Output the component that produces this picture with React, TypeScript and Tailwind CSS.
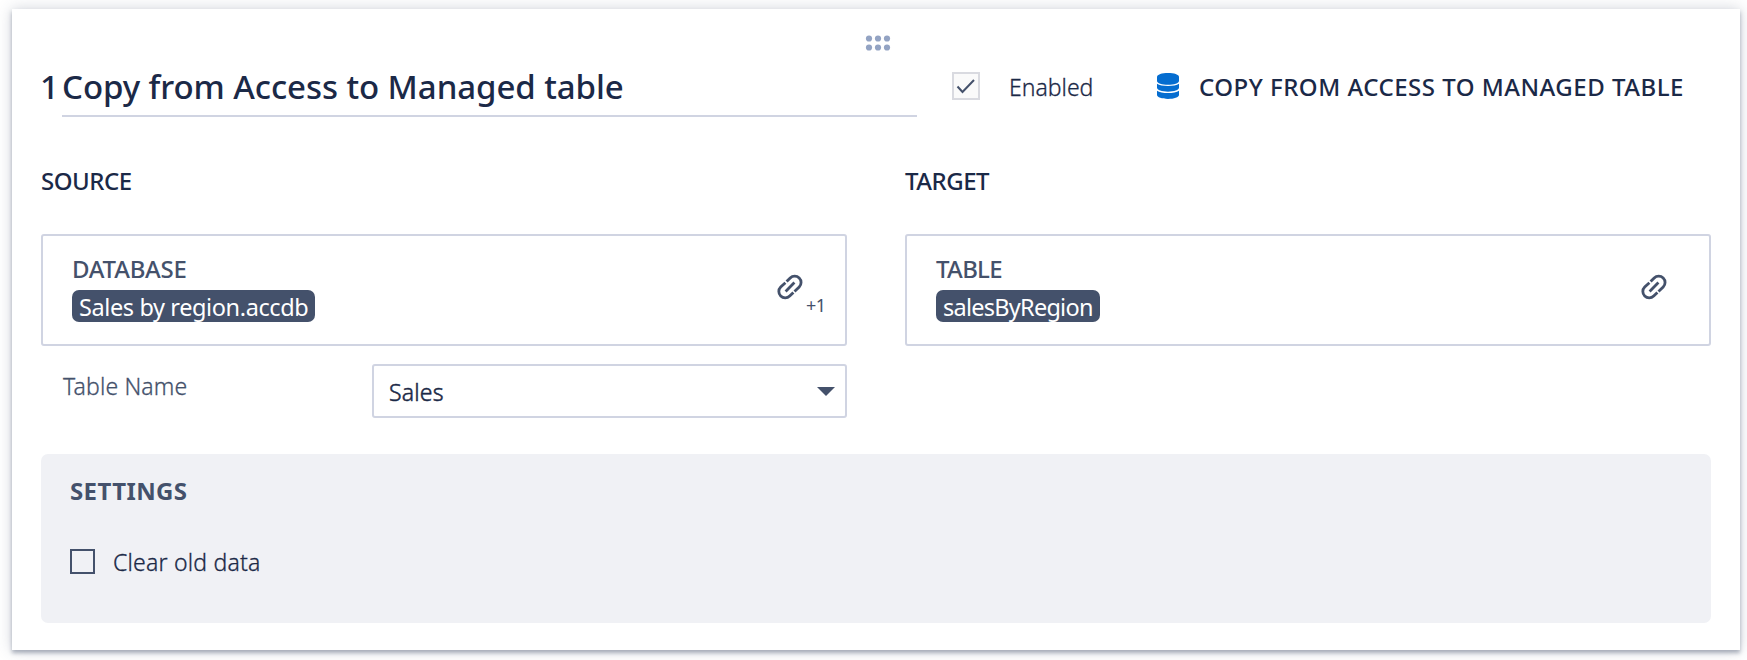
import type { ReactNode } from 'react'

interface ResourceCardProps {
  label: string
  value: string
  labelClass?: string
  valueClass?: string
  extra?: string
}

function LinkIcon() {
  return (
    <svg viewBox="0 0 26 26" className="h-[26px] w-[26px]" fill="none" stroke="#44516b" strokeWidth="2.8">
      <path d="M9.6 7.600 13.200 3.900a6.200 6.200 0 0 1 9 9l-4.700 4.500" />
      <path d="M8.400 8.700 3.700 13.100a6.200 6.200 0 0 0 9 9l3.700-3.700" />
      <path d="m8.600 17.400 8.800-8.800" />
    </svg>
  )
}

function DragHandle() {
  return (
    <svg viewBox="0 0 26 16" className="h-4 w-[26px]" fill="#93a3c3">
      {[4, 13, 22].map((x) => [3.5, 12.5].map((y) => <circle key={`${x}-${y}`} cx={x} cy={y} r="3.1" />))}
    </svg>
  )
}

function DatabaseIcon() {
  return (
    <svg viewBox="0 0 22 26" className="h-[26px] w-[22px]" fill="#056dd0">
      <path d="M0 4C0 1.500 5 0 11 0s11 1.500 11 4v4c0 2.300-5 3.700-11 3.700S0 10.300 0 8z" />
      <path d="M0 10.800c2.200 1.500 6.200 2.200 11 2.200s8.800-.7 11-2.200v4c0 2.300-5 3.900-11 3.900s-11-1.600-11-3.900z" />
      <path d="M0 17.800c2.200 1.600 6.200 2.300 11 2.300s8.800-.7 11-2.300v4.300c0 2.400-5 3.900-11 3.900s-11-1.500-11-3.900z" />
    </svg>
  )
}

function SectionTitle({ children }: { children: ReactNode }) {
  return <h3 className="h-8 text-[24px] font-medium leading-8 tracking-[-0.5px] text-[#1b2947]">{children}</h3>
}

/** Bordered box for the resource a step reads from or writes to. */
function ResourceCard({ label, value, labelClass = '', valueClass = '', extra }: ResourceCardProps) {
  return (
    <div className="flex h-28 justify-between rounded-[3px] border-2 border-[#d0d4e2] pl-[29px] pt-[17px]">
      <div className="flex flex-col items-start">
        <span className={`h-8 text-[24px] font-medium leading-8 text-[#44516b] ${labelClass}`}>{label}</span>
        <span className="mt-[5px] h-8 overflow-hidden rounded-[7px] bg-[#44516b] px-[7px] text-[23.5px] leading-[34px] text-white">
          <span className={`whitespace-nowrap ${valueClass}`}>{value}</span>
        </span>
      </div>
      <div className="flex w-[68px] pt-[21px]">
        <LinkIcon />
        <span className="ml-[3px] mt-[19px] text-[18px] leading-6 tracking-[-0.5px] text-[#44516b]">{extra}</span>
      </div>
    </div>
  )
}

export default function App() {
  return (
    <main className="h-[660px] w-[1747px] overflow-hidden bg-white pl-3 pt-[9px] font-['Noto_Sans',sans-serif]">
      <section className="flex h-[641px] w-[1728px] flex-col bg-white px-[29px] shadow-[0_3px_4px_rgba(68,81,107,0.4),0_0_14px_rgba(68,81,107,0.25)]">
        <div className="flex justify-center pl-1 pt-[26px]">
          <DragHandle />
        </div>

        <header className="flex h-[66px] items-start">
          <div className="w-[21px] pt-3 text-[33px] font-medium leading-[48px] text-[#1b2947]">
            <span className="-ml-px">1</span>
          </div>
          <div className="h-[66px] w-[855px] border-b-2 border-[#d0d4e2] pt-3">
            <h2 className="whitespace-nowrap text-[33px] font-medium leading-[48px] tracking-[-0.07px] text-[#1b2947]">
              Copy from Access to Managed table
            </h2>
          </div>
          <div className="ml-[35px] mt-[21px] flex h-7 w-7 items-center justify-center border-2 border-[#d9dae0] bg-[#fafafa]">
            <svg viewBox="0 0 20 16" className="h-4 w-5" fill="none" stroke="#44516b" strokeWidth="2">
              <path d="m1.500 8.500 5 5.500L18 2" />
            </svg>
          </div>
          <span className="ml-[29px] mt-5 w-[148px] text-[23px] font-light leading-8 text-[#1b2947] [-webkit-text-stroke:0.3px]">
            Enabled
          </span>
          <div className="mt-[22px]">
            <DatabaseIcon />
          </div>
          <span className="ml-5 mt-5 whitespace-nowrap text-[24px] font-medium leading-8 tracking-[0.5px] text-[#1b2947]">
            COPY FROM ACCESS TO MANAGED TABLE
          </span>
        </header>

        <div className="mt-[48px] flex gap-[58px]">
          <div className="w-[806px]">
            <SectionTitle>SOURCE</SectionTitle>
            <div className="mt-[37px]">
              <ResourceCard
                label="DATABASE"
                value="Sales by region.accdb"
                labelClass="tracking-[-0.25px]"
                valueClass="tracking-[-0.39px]"
                extra="+1"
              />
            </div>
            <div className="mt-[18px] flex justify-between pl-[22px]">
              <span className="mt-[6px] text-[23px] font-light leading-8 tracking-[0.15px] text-[#44516b] [-webkit-text-stroke:0.3px]">
                Table Name
              </span>
              <div className="flex h-[54px] w-[475px] items-center justify-between rounded-[3px] border-2 border-[#d0d4e2] pl-[15px] pr-[10px] text-[23px] leading-8 text-[#1b2947]">
                <span className="mt-px font-light tracking-[0.2px] [-webkit-text-stroke:0.5px]">Sales</span>
                <svg viewBox="0 0 18 9" className="h-[9px] w-[18px]" fill="#44516b">
                  <path d="M0 0h18L9 9z" />
                </svg>
              </div>
            </div>
          </div>
          <div className="w-[806px]">
            <SectionTitle>TARGET</SectionTitle>
            <div className="mt-[37px]">
              <ResourceCard
                label="TABLE"
                value="salesByRegion"
                labelClass="tracking-[-0.7px]"
                valueClass="tracking-[-0.75px]"
              />
            </div>
          </div>
        </div>

        <div className="mt-9 h-[169px] rounded-[7px] bg-[#f0f1f5] pl-[29px] pt-[21px]">
          <h3 className="text-[24px] font-bold leading-8 tracking-[0.4px] text-[#44516b]">SETTINGS</h3>
          <label className="mt-[37px] flex items-center">
            <span className="h-[25px] w-[25px] border-2 border-[#44516b]" />
            <span className="ml-[18px] mt-0.5 text-[23px] font-light leading-8 tracking-[0.2px] text-[#1b2947] [-webkit-text-stroke:0.3px]">
              Clear old data
            </span>
          </label>
        </div>
      </section>
    </main>
  )
}
